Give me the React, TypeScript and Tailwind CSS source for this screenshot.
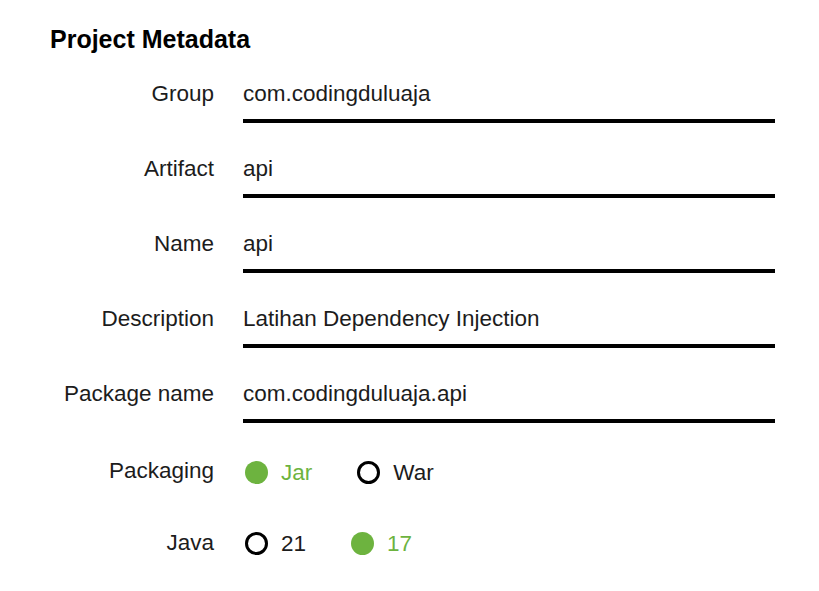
import React from "react";

const fields = [
  { label: "Group", value: "com.codingduluaja" },
  { label: "Artifact", value: "api" },
  { label: "Name", value: "api" },
  { label: "Description", value: "Latihan Dependency Injection" },
  { label: "Package name", value: "com.codingduluaja.api" },
];

const Radio = ({ label, checked }: { label: string; checked?: boolean }) => (
  <div className="flex items-center gap-[13px]">
    {checked ? (
      <span className="block w-[23px] h-[23px] rounded-full bg-[#6db33f]" />
    ) : (
      <span className="block w-[23px] h-[23px] rounded-full border-[3px] border-black" />
    )}
    <span className={checked ? "text-[#6db33f]" : "text-[#1c1c1c]"}>{label}</span>
  </div>
);

export default function App() {
  return (
    <div
      className="min-h-screen bg-white pl-[50px] pt-[25px] text-[#1c1c1c]"
      style={{ fontFamily: '"Liberation Sans", Arial, sans-serif' }}
    >
      <h1 className="text-[25px] font-bold text-black leading-[28px]">Project Metadata</h1>

      <div className="mt-[28px] flex flex-col text-[22.5px]">
        {fields.map((f) => (
          <div key={f.label} className="flex mb-[33px]">
            <div className="w-[164px] text-right leading-[25px]">{f.label}</div>
            <div className="ml-[29px] w-[532px] pb-[13px] border-b-4 border-black leading-[25px]">
              {f.value}
            </div>
          </div>
        ))}

        <div className="flex mt-[2px]">
          <div className="w-[164px] text-right leading-[25px]">Packaging</div>
          <div className="ml-[31px] mt-[2px] flex gap-[45px] leading-[25px]">
            <Radio label="Jar" checked />
            <Radio label="War" />
          </div>
        </div>

        <div className="flex mt-[45px]">
          <div className="w-[164px] text-right leading-[25px]">Java</div>
          <div className="ml-[31px] mt-[1px] flex gap-[45px] leading-[25px]">
            <Radio label="21" />
            <Radio label="17" checked />
          </div>
        </div>
      </div>
    </div>
  );
}
